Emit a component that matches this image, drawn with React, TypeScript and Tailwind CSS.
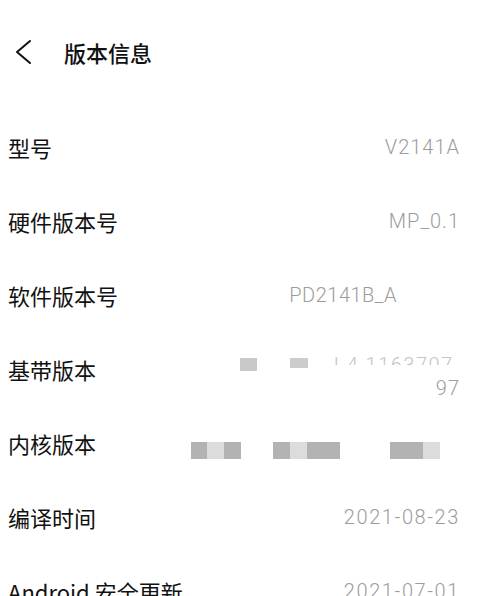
import React from 'react';

const cjk = { fontFamily: '"Noto Sans CJK SC", "Noto Sans", sans-serif' };
const num = { fontFamily: 'Roboto, "Noto Sans CJK SC", sans-serif' };

const Block: React.FC<{ w: number; tone: 'd' | 'l' }> = ({ w, tone }) => (
  <span className={`inline-block h-[17px] ${tone === 'd' ? 'bg-[#b3b3b3]' : 'bg-[#dcdcdc]'}`} style={{ width: w }} />
);

const Row: React.FC<{ label: string; children?: React.ReactNode }> = ({ label, children }) => (
  <div className="flex h-[74px] items-center justify-between pl-[8px] pr-[40px]">
    <span className="text-[22px] leading-none text-[#111]" style={cjk}>{label}</span>
    {children}
  </div>
);

const Value: React.FC<{ children: React.ReactNode; wide?: boolean }> = ({ children, wide }) => (
  <span className={`text-[20px] font-light leading-none text-[#9c9c9c] ${wide ? 'tracking-[1.6px]' : 'tracking-[1px]'}`} style={num}>{children}</span>
);

export default function App() {
  return (
    <div className="h-[596px] w-[500px] overflow-hidden bg-white">
      <div className="flex h-[104px] items-center">
        <svg width="18" height="26" viewBox="0 0 18 26" className="ml-[14px]">
          <path d="M16 2 L3 13 L16 24" fill="none" stroke="#111" strokeWidth="2" strokeLinecap="round" strokeLinejoin="round" />
        </svg>
        <span className="ml-[32px] text-[22px] font-medium leading-none text-[#111]" style={cjk}>版本信息</span>
      </div>

      <div className="pt-[6px]">
        <Row label="型号"><Value>V2141A</Value></Row>
        <Row label="硬件版本号"><Value>MP_0.1</Value></Row>
        <Row label="软件版本号">
          <span className="mr-[63px] text-[20px] font-light leading-none tracking-[0.5px] text-[#9c9c9c]" style={num}>PD2141B_A</span>
        </Row>
        <Row label="基带版本">
          <div className="mt-[20px] flex flex-col items-end">
            <div className="flex items-start">
              <span className="mt-[1px] inline-block h-[13px] w-[17px] bg-[#c8c8c8]" />
              <span className="ml-[33px] mt-[1px] inline-block h-[10px] w-[18px] bg-[#cccccc]" />
              <span className="relative ml-[25px] block h-[8px] w-[127px] overflow-hidden">
                <span className="absolute bottom-0 right-0 translate-y-[10px] whitespace-nowrap text-[20px] font-light leading-[20px] tracking-[1.5px] text-[#c4c4c4]" style={num}>2N 4.1163707.</span>
              </span>
            </div>
            <div className="mt-[6px]"><Value>97</Value></div>
          </div>
        </Row>
        <Row label="内核版本">
          <div className="mr-[20px] mt-[14px] flex items-center">
            <Block w={16} tone="d" /><Block w={17} tone="l" /><Block w={17} tone="d" />
            <span className="w-[32px]" />
            <Block w={17} tone="d" /><Block w={17} tone="l" /><Block w={33} tone="d" />
            <span className="w-[50px]" />
            <Block w={17} tone="d" /><Block w={16} tone="d" /><Block w={17} tone="l" />
          </div>
        </Row>
        <Row label="编译时间"><Value wide>2021-08-23</Value></Row>
        <Row label="Android 安全更新"><Value wide>2021-07-01</Value></Row>
      </div>
    </div>
  );
}
